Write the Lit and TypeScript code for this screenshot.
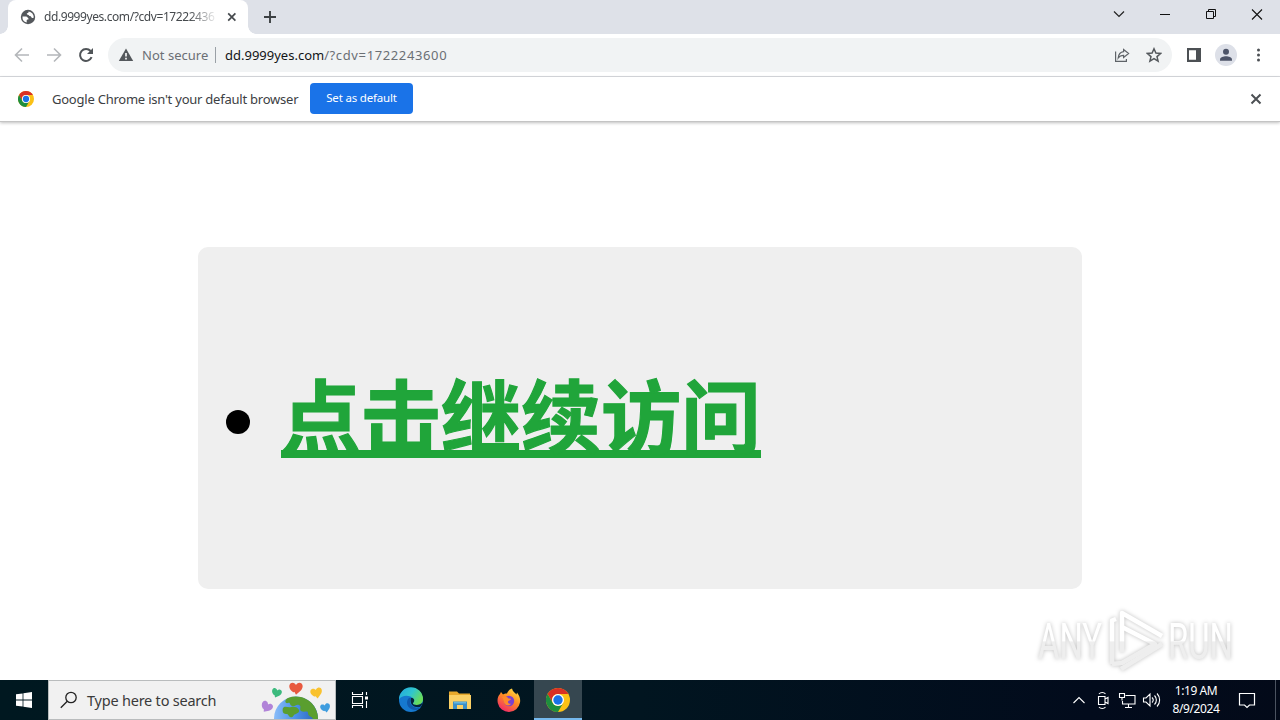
import { html, svg, LitElement, css, CSSResultArray, TemplateResult } from "lit";
import { customElement, property } from "lit/decorators.js";

@customElement("browser-tabs")
export class BrowserTabs extends LitElement {

  /** Title of the open tab. */
  @property({ type: String })
  title: string = "";

  static get styles(): CSSResultArray {
    return [
      css`
          :host {
            display: flex;
            height: 34px;
            background: #dee1e8;
            padding-left: 8px;
          }

          .tab {
            position: relative;
            display: flex;
            align-items: center;
            box-sizing: border-box;
            width: 240px;
            padding: 0 8px 0 12px;
            background: #fff;
            border-radius: 8px 8px 0 0;
          }

          .tab:before,
          .tab:after {
            content: "";
            position: absolute;
            bottom: 0;
            width: 8px;
            height: 8px;
          }

          .tab:before {
            left: -8px;
            background: radial-gradient(circle at 0 0, #dee1e8 7.5px, #fff 8px);
          }

          .tab:after {
            right: -8px;
            background: radial-gradient(circle at 100% 0, #dee1e8 7.5px, #fff 8px);
          }

          .title {
            width: 171px;
            margin-left: 8px;
            overflow: hidden;
            white-space: nowrap;
            font-size: 12px;
            line-height: 16px;
            letter-spacing: -0.42px;
            color: #45494d;
            -webkit-mask-image: linear-gradient(to right, #000 145px, transparent 174px);
          }

          svg {
            display: block;
            flex: none;
          }

          .close {
            margin-left: 9px;
          }

          .plus {
            margin: 9px 0 0 14px;
          }

          .controls {
            display: flex;
            margin-left: auto;
          }

          .controls svg {
            width: 46px;
            height: 28px;
          }
          `
    ];
  }

  render(): TemplateResult {
    return html`
      <div class="tab">
        <svg width="16" height="16" viewBox="0 0 16 16">
          <circle cx="8" cy="8" r="7.2" fill="#54585c"></circle>
          <path d="M2.500 7.500h3.500c1.500 0 1.500 1.300 2.200 1.800.8.600.3 1.300-.7 1.300-.8 0-.8.800-.8 1.400v1.500A5.700 5.700 0 0 1 2.500 7.500z" fill="#fff"></path>
          <path d="M8.600 2.400c0 1-.3 1.700-1.400 1.800-.8.100-.3 1.500.6 1.500 1.300 0 1.200 1.300 2.200 1.400 1.200.1.900 1.600 2.300 1.800h1.200A5.700 5.700 0 0 0 8.600 2.400z" fill="#fff"></path>
        </svg>
        <span class="title">${this.title}</span>
        <svg class="close" width="16" height="16" viewBox="0 0 16 16">
          <path d="M4.200 4.400l7.200 7.200M11.400 4.400l-7.200 7.200" stroke="#45494d" stroke-width="1.700"></path>
        </svg>
      </div>
      <svg class="plus" width="16" height="16" viewBox="0 0 16 16">
        <path d="M8 2v12M2 8h12" stroke="#3c4043" stroke-width="1.900"></path>
      </svg>
      <div class="controls">
        <svg viewBox="0 0 46 28"><path d="M18 11.500l5 5 5-5" fill="none" stroke="#222" stroke-width="1.200"></path></svg>
        <svg viewBox="0 0 46 28"><path d="M18 14.500h10" stroke="#111"></path></svg>
        <svg viewBox="0 0 46 28"><path d="M18.500 11.500h7v7h-7zM20.500 11.500v-2h7v7h-2" fill="none" stroke="#111"></path></svg>
        <svg viewBox="0 0 46 28"><path d="M18 9.500l10 10M28 9.500l-10 10" stroke="#111" stroke-width="1.100"></path></svg>
      </div>`;
  }
}

@customElement("browser-toolbar")
export class BrowserToolbar extends LitElement {

  /** Host part of the address. */
  @property({ type: String })
  host: string = "";

  /** Path and query, drawn lighter than the host. */
  @property({ type: String })
  path: string = "";

  static get styles(): CSSResultArray {
    return [
      css`
          :host {
            display: flex;
            align-items: center;
            box-sizing: border-box;
            height: 43px;
            padding: 0 12px 0 12px;
            background: #fff;
            border-bottom: 1px solid #dadce0;
          }

          svg {
            display: block;
            flex: none;
          }

          .nav {
            display: flex;
            gap: 12px;
          }

          .omnibox {
            display: flex;
            flex: 1;
            align-items: center;
            box-sizing: border-box;
            height: 34px;
            margin: 0 12px 0 12px;
            padding: 0 10px;
            border-radius: 17px;
            background: #f1f3f4;
            font-size: 13px;
            line-height: 18px;
            color: #6b6f74;
            white-space: nowrap;
          }

          .secure {
            width: 66px;
            margin-left: 8px;
            letter-spacing: 0.02px;
          }

          .divider {
            width: 1px;
            height: 16px;
            margin: 0 9px 0 7px;
            background: #9aa0a6;
          }

          .host {
            color: #111417;
          }

          .path {
            letter-spacing: 0.62px;
          }

          .actions {
            display: flex;
            gap: 16px;
            margin-left: auto;
          }

          .avatar {
            margin: 0 15px 0 11px;
          }
          `
    ];
  }

  render(): TemplateResult {
    return html`
      <div class="nav">
        <svg width="20" height="20" viewBox="0 0 20 20"><path d="M17 10H4M10 3.500L3.500 10l6.500 6.500" fill="none" stroke="#b4b7ba" stroke-width="1.600"></path></svg>
        <svg width="20" height="20" viewBox="0 0 20 20"><path d="M3 10h13M10 3.500l6.500 6.500-6.500 6.500" fill="none" stroke="#b4b7ba" stroke-width="1.600"></path></svg>
        <svg width="20" height="20" viewBox="0 0 20 20">
          <path d="M15.600 12.200A6 6 0 1 1 14.600 6" fill="none" stroke="#505458" stroke-width="2"></path>
          <path d="M17 3v6h-6z" fill="#505458"></path>
        </svg>
      </div>
      <div class="omnibox">
        <svg width="16" height="16" viewBox="0 0 16 16">
          <path d="M8 1.500L15.200 14H.8z" fill="#54585c"></path>
          <path d="M7.200 6h1.600v3.600H7.200zM7.200 10.800h1.600v1.600H7.200z" fill="#fff"></path>
        </svg>
        <span class="secure">Not secure</span>
        <span class="divider"></span>
        <span class="url"><span class="host">${this.host}</span><span class="path">${this.path}</span></span>
        <div class="actions">
          <svg width="16" height="16" viewBox="0 0 16 16" fill="none" stroke="#5f6368" stroke-width="1.200">
            <path d="M1.600 4.500v9.900h10.800v-2.500"></path>
            <path d="M9.600 2.500L14.600 6.500 9.600 10.500V8.300C7 8.300 5.400 9.300 4.200 11 4.500 7.800 6.300 5.100 9.600 4.700z"></path>
          </svg>
          <svg width="16" height="16" viewBox="0 0 16 16"><path d="M8 1.800l1.900 4.300 4.700.4-3.600 3.100 1.100 4.600L8 11.700l-4.100 2.500L5 9.600 1.400 6.500l4.700-.4z" fill="none" stroke="#54585c" stroke-width="1.500"></path></svg>
        </div>
      </div>
      <svg width="20" height="20" viewBox="0 0 20 20"><path d="M3 3h14v14H3zM5 5.200v9.600h7V5.200z" fill="#4c5054" fill-rule="evenodd"></path></svg>
      <svg class="avatar" width="22" height="22" viewBox="0 0 22 22">
        <circle cx="11" cy="11" r="11" fill="#dde0e8"></circle>
        <circle cx="11" cy="7.800" r="3" fill="#4d5468"></circle>
        <path d="M5 16.800v-1.300c0-2.200 3.500-3.300 6-3.300s6 1.100 6 3.300v1.300z" fill="#4d5468"></path>
      </svg>
      <svg width="16" height="20" viewBox="0 0 16 20" fill="#4c5054">
        <circle cx="6.500" cy="5" r="1.500"></circle><circle cx="6.500" cy="10" r="1.500"></circle><circle cx="6.500" cy="15" r="1.500"></circle>
      </svg>`;
  }
}

/** Chrome logo, shared by the info bar and the taskbar. */
const chromeLogo = (size: number): TemplateResult => html`
  <svg width=${size} height=${size} viewBox="0 0 24 24">
    <circle cx="12" cy="12" r="12" fill="#fbc116"></circle>
    <path d="M12 0A12 12 0 0 1 22.400 6H12a6 6 0 0 0-5.200 9L1.600 6A12 12 0 0 1 12 0z" fill="#d93025"></path>
    <path d="M1.600 6l5.200 9A6 6 0 0 0 17.200 15L12 24A12 12 0 0 1 1.600 6z" fill="#1e8e3e"></path>
    <circle cx="12" cy="12" r="6" fill="#fff"></circle>
    <circle cx="12" cy="12" r="4.700" fill="#1a73e8"></circle>
  </svg>`;

@customElement("info-bar")
export class InfoBar extends LitElement {

  static get styles(): CSSResultArray {
    return [
      css`
          :host {
            display: flex;
            align-items: center;
            box-sizing: border-box;
            height: 45px;
            padding: 0 16px 0 18px;
            background: #fff;
            border-bottom: 1px solid #c4c4c4;
            box-shadow: 0 1px 3px rgba(0, 0, 0, 0.25);
            position: relative;
            white-space: nowrap;
          }

          svg {
            display: block;
          }

          .message {
            width: 246px;
            margin-left: 18px;
            font-size: 13px;
            color: #3c4043;
            letter-spacing: -0.23px;
          }

          button {
            width: 103px;
            height: 31px;
            margin: 0 auto 1px 12px;
            padding: 0 0 2px;
            border: 0;
            border-radius: 4px;
            background: #1a73e8;
            color: #fff;
            font: 11.5px "Noto Sans", sans-serif;
            letter-spacing: -0.18px;
          }
          `
    ];
  }

  render(): TemplateResult {
    return html`
      ${chromeLogo(16)}
      <span class="message">Google Chrome isn't your default browser</span>
      <button>Set as default</button>
      <svg width="16" height="16" viewBox="0 0 16 16">
        <path d="M3.500 3.500l9 9M12.500 3.500l-9 9" stroke="#4c5054" stroke-width="2"></path>
      </svg>`;
  }
}

@customElement("task-bar")
export class TaskBar extends LitElement {

  @property({ type: String })
  time: string = "";

  @property({ type: String })
  date: string = "";

  static get styles(): CSSResultArray {
    return [
      css`
          :host {
            display: flex;
            height: 40px;
            background: linear-gradient(to right, #001820, #011520 50%, #020b1c 85%, #030a19);
            color: #fff;
            white-space: nowrap;
          }

          svg {
            display: block;
            flex: none;
          }

          .item {
            display: flex;
            align-items: center;
            justify-content: center;
            box-sizing: border-box;
            width: 49px;
            height: 40px;
          }

          .start {
            width: 48px;
          }

          .tasks {
            width: 50px;
            padding-right: 2px;
          }

          .active {
            width: 48px;
            margin-left: 1px;
            background: #364750;
            border-bottom: 2px solid #76b9ed;
            padding-top: 2px;
          }

          .search {
            display: flex;
            align-items: center;
            box-sizing: border-box;
            width: 288px;
            padding-left: 11px;
            background: #f1f1f1;
            border: 1px solid #b9bcbd;
            color: #3a3a3a;
            font-size: 14.5px;
            letter-spacing: -0.22px;
          }

          .search span {
            width: 129px;
            margin-left: 9px;
          }

          .globe {
            margin-left: auto;
          }

          .tray {
            display: flex;
            align-items: center;
            margin-left: auto;
          }

          .clock {
            width: 64px;
            font-size: 12px;
            line-height: 18px;
            text-align: center;
            letter-spacing: -0.42px;
          }

          .notices {
            margin-left: 10px;
          }

          .desktop {
            width: 4px;
            height: 40px;
            margin-left: 19px;
            border-left: 1px solid #4b5360;
          }
          `
    ];
  }

  private _heart(x: number, y: number, scale: number, turn: number, color: string) {
    return svg`<path transform="translate(${x} ${y}) rotate(${turn}) scale(${scale})" fill=${color}
      d="M0 5.500C-3-.0 0 5.500-4 2-7-1-6-5-3-5-1.500-5-.5-4 0-3 .5-4 1.500-5 3-5 6-5 7-1 4 2z"></path>`;
  }

  render(): TemplateResult {
    return html`
      <div class="item start">
        <svg width="16" height="16" viewBox="0 0 16 16" fill="#fff">
          <path d="M0 2.300l6.600-.9v6.200H0zM7.400 1.300L16 0v7.600H7.400zM0 8.400h6.600v6.200L0 13.700zM7.400 8.400H16V16l-8.600-1.200z"></path>
        </svg>
      </div>
      <div class="search">
        <svg width="18" height="18" viewBox="0 0 18 18" fill="none" stroke="#222" stroke-width="1.300">
          <circle cx="11" cy="6.500" r="5.200"></circle><path d="M7.300 10.200L.8 16.700"></path>
        </svg>
        <span>Type here to search</span>
        <svg class="globe" width="74" height="38" viewBox="0 0 74 38">
          <defs>
            <linearGradient id="sea" x1="0" y1="0" x2="1" y2="0">
              <stop offset="0" stop-color="#8abdf8"></stop><stop offset=".5" stop-color="#4a90e8"></stop><stop offset="1" stop-color="#2a62b8"></stop>
            </linearGradient>
          </defs>
          <circle cx="35" cy="37.500" r="22" fill="url(#sea)"></circle>
          <path d="M27 17c9-3.500 20-.5 26 8 2.500 4 4 8 4 13h-5c-1-3-5-2-5-6 0-3-4 0-7-2-2-2 1-5-2-6s-4 2-7 1-1-4-4-3-4-3 0-5z" fill="#5a9e2f"></path>
          <path d="M22 27c2-3 5 0 8-1s7 0 8 3-4 4-5 5-1 3-4 2c-2-1-1-3-4-3s-4-3-3-6z" fill="#5a9e2f"></path>
          ${this._heart(35, 7.500, 1.150, 0, "#e8593f")}
          ${this._heart(15.500, 12, 0.850, 18, "#3cba7d")}
          ${this._heart(55.500, 12, 1, -12, "#f9c22e")}
          ${this._heart(5.500, 26, 1, 30, "#b184d8")}
          ${this._heart(64.500, 27, 0.850, -15, "#3f9ddf")}
        </svg>
      </div>
      <div class="item tasks">
        <svg width="18" height="18" viewBox="0 0 18 18" fill="none" stroke="#fff" stroke-width="1.100">
          <path d="M1.500 5.500h10v7h-10zM1.500 1v2.500h10V1M1.500 17v-2.500h10V17M15.500 1v3M15.500 10v7"></path>
          <path d="M14 5.500h3v3h-3z" fill="#fff" stroke="none"></path>
        </svg>
      </div>
      <div class="item">
        <svg width="26" height="26" viewBox="0 0 26 26">
          <defs>
            <linearGradient id="edge" x1="0" y1="0" x2="1" y2=".5">
              <stop offset="0" stop-color="#22a8df"></stop><stop offset=".55" stop-color="#30c5ce"></stop><stop offset="1" stop-color="#69dc59"></stop>
            </linearGradient>
          </defs>
          <circle cx="13" cy="13" r="12" fill="#1679cf"></circle>
          <path d="M1 12.500A12 12 0 0 1 25 12c0 4-3 6-6.500 6-2.500 0-4-1-3.500-2 1.500-2 1-5-2.500-6.500C8 8 3 9 1 12.500z" fill="url(#edge)"></path>
          <path d="M10 12c-3 5 1 11 7.500 11 2 0 4-1 5.500-2.500C19 22 13 20 12 15c-.3-1.800.3-3 1-4-1.200-.5-2.200 0-3 1z" fill="#1059ac"></path>
          <path d="M13 11c3-.5 4.500 2.500 2 5-.5 1 1 2 3.500 2 2.500 0 5-1 6-2.500-.5 2.500-1.500 3.700-2.500 4.600C17 21 11 18 13 11z" fill="#05233b"></path>
        </svg>
      </div>
      <div class="item">
        <svg width="22" height="20" viewBox="0 0 22 20">
          <path d="M0 1.500h8l2 2h11v15.500H0z" fill="#e8a92c"></path>
          <path d="M0 5h22v14H0z" fill="#fbd065"></path>
          <path d="M4 19v-7.500h14V19h-4v-4H8v4z" fill="#3c8fc7"></path>
          <path d="M5 12h12v1.500H5z" fill="#65b5df"></path>
        </svg>
      </div>
      <div class="item">
        <svg width="24" height="24" viewBox="0 0 24 24">
          <defs>
            <linearGradient id="fox" x1=".8" y1="0" x2=".2" y2="1">
              <stop offset="0" stop-color="#ffe044"></stop><stop offset=".45" stop-color="#ff8b22"></stop><stop offset="1" stop-color="#f0206f"></stop>
            </linearGradient>
          </defs>
          <path d="M4 4l2 2.500C8 5 10 5.500 10 5.500 11 3 13 1 15 .5c.5 3 3 4 4.500 6l.5-2c3 4 3.500 7 3 10a11.300 11.300 0 0 1-22.200.5C0 11 1 8 3 6z" fill="url(#fox)"></path>
          <circle cx="12" cy="13" r="5.200" fill="#7a40d0"></circle>
          <path d="M5 9c3-1.500 6 0 6.500 1.500 1 0 2 0 2.500.5-.5 1.500-3 1.500-3 3 0 1.500 1.500 2 3 1.700-1.500 2.500-5 2.300-6.500-.2C6.500 14 7 11.500 5 9z" fill="#ff8a2a"></path>
        </svg>
      </div>
      <div class="item active">${chromeLogo(24)}</div>
      <div class="tray">
        <svg width="98" height="24" viewBox="0 0 98 24" fill="none" stroke="#fff" stroke-width="1.100">
          <path d="M7.500 15l5.500-5.500 5.500 5.500"></path>
          <path d="M32.500 8.500h6.500v8h-6.500zM39 11l3-1.500v6L39 14M33 6c1.500-2 5-2 6.500 0M33 19c1.500 2 5 2 6.500 0"></path>
          <path d="M59.500 7.500h9.500v8.500H56.500v-3M62.500 16v3M59 19.500h7M53.500 5.500h5v4h-5zM56 9.500v3"></path>
          <path d="M77.500 10h2.500l4-4v12l-4-4h-2.500zM86 9.500c1.500 1.500 1.500 3.500 0 5M88.500 7.500c2.500 2.500 2.500 6.500 0 9M91 5.500c3.500 3.500 3.500 9.500 0 13"></path>
        </svg>
        <div class="clock">${this.time}<br>${this.date}</div>
        <svg class="notices" width="18" height="18" viewBox="0 0 18 18">
          <path d="M1.500 2.500h15v11.500h-5L9 16.500 6.500 14h-5z" fill="none" stroke="#fff" stroke-width="1.200"></path>
        </svg>
        <div class="desktop"></div>
      </div>`;
  }
}

@customElement("app-root")
export class AppRoot extends LitElement {

  static get styles(): CSSResultArray {
    return [
      css`
          :host {
            display: flex;
            flex-direction: column;
            position: relative;
            width: 1280px;
            height: 720px;
            overflow: hidden;
            background: #fff;
            font-family: "Noto Sans", sans-serif;
          }

          main {
            flex: 1;
            padding: 125px 198px 0;
          }

          .card {
            display: flex;
            align-items: center;
            box-sizing: border-box;
            height: 342px;
            padding: 0 28px;
            border-radius: 10px;
            background: #efefef;
          }

          .bullet {
            width: 24px;
            height: 24px;
            margin: 8px 31px 0 0;
            border-radius: 50%;
            background: #000;
          }

          a {
            margin-bottom: 12px;
            color: #20a53a;
            font: bold 80px/106px "Noto Sans CJK SC", sans-serif;
            -webkit-text-stroke: 1.2px #20a53a;
            text-decoration: underline;
            text-decoration-thickness: 8px;
            text-underline-offset: 3px;
            text-decoration-skip-ink: none;
          }

          .watermark {
            position: absolute;
            left: 1030px;
            top: 600px;
            filter: drop-shadow(0 0 2px rgba(0, 0, 0, 0.25));
          }
          `
    ];
  }

  render(): TemplateResult {
    return html`
      <browser-tabs title="dd.9999yes.com/?cdv=1722243600"></browser-tabs>
      <browser-toolbar host="dd.9999yes.com" path="/?cdv=1722243600"></browser-toolbar>
      <info-bar></info-bar>
      <main>
        <div class="card">
          <span class="bullet"></span>
          <a href="#">点击继续访问</a>
        </div>
      </main>
      <task-bar time="1:19 AM" date="8/9/2024"></task-bar>
      <svg class="watermark" width="230" height="80" viewBox="0 0 230 80">
        <defs>
          <linearGradient id="fade" gradientUnits="userSpaceOnUse" x1="0" y1="20" x2="0" y2="62">
            <stop offset=".5" stop-color="#fff"></stop><stop offset=".52" stop-color="#eee"></stop>
          </linearGradient>
        </defs>
        <g fill="url(#fade)" font-family="Roboto, sans-serif" font-size="50">
          <text x="8" y="59" textLength="64" lengthAdjust="spacingAndGlyphs">ANY</text>
          <text x="138" y="59" textLength="65" lengthAdjust="spacingAndGlyphs">RUN</text>
        </g>
        <g fill="none" stroke="url(#fade)" stroke-width="4.500" stroke-linejoin="round">
          <path d="M86 19l-4 1.500V64"></path>
          <path d="M92 52V13l40 23"></path>
          <path d="M92 27l33 17-33 19-10 1"></path>
          <path d="M91 69l41-25"></path>
        </g>
      </svg>`;
  }
}
